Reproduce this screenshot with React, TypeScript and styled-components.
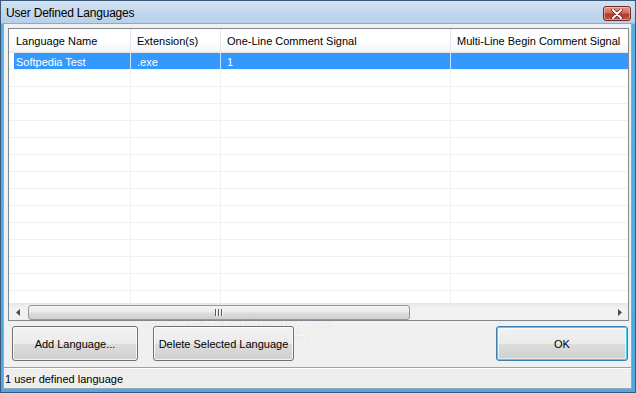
import React from "react";
import styled, { createGlobalStyle } from "styled-components";

const Global = createGlobalStyle`
  html, body { margin: 0; padding: 0; background: #fff; }
  body { font-family: "Liberation Sans", Arial, sans-serif; font-size: 11px; }
  * { box-sizing: border-box; }
`;

const Window = styled.div`
  width: 636px;
  height: 393px;
  display: flex;
  flex-direction: column;
  border: 1px solid #3b5978;
  background: linear-gradient(to bottom, #d3e2f3 0px, #bfd4ec 22px, #56aee4 23px, #4fa9e0 100%);
  overflow: hidden;
  position: relative;
`;

const TitleBar = styled.div`
  height: 22px;
  flex: none;
  display: flex;
  align-items: center;
  justify-content: space-between;
  padding: 0 4px 0 5px;
  background: linear-gradient(to bottom, #d3e2f3 0%, #c4d8ee 50%, #b6cfea 100%);
`;

const Title = styled.span`
  font-size: 12px;
  color: #000;
  letter-spacing: -0.2px;
  margin-top: 1px;
`;

const CloseButton = styled.div`
  width: 28px;
  height: 15px;
  margin-top: 3px;
  border: 1px solid #6b2b2b;
  border-radius: 3px;
  background: linear-gradient(to bottom, #e49a8c 0%, #d36b5a 45%, #b53a26 55%, #c8553f 100%);
  display: flex;
  align-items: center;
  justify-content: center;
  box-shadow: inset 0 0 0 1px rgba(255, 220, 210, 0.5);
`;

const Client = styled.div`
  flex: 1;
  margin: 0 3px 3px 2px;
  background: #f0f0f0;
  border: 1px solid #8fa8c4;
  display: flex;
  flex-direction: column;
  position: relative;
`;

const ListView = styled.div`
  margin: 4px 2px 0 4px;
  height: 293px;
  border: 1px solid #828790;
  background: #fff;
  display: flex;
  flex-direction: column;
  overflow: hidden;
`;

const Viewport = styled.div`
  flex: 1;
  overflow: hidden;
`;

const gridCols = "122px 90px 230px 200px";

const HeaderRow = styled.div`
  display: grid;
  grid-template-columns: ${gridCols};
  height: 24px;
  background: linear-gradient(to bottom, #ffffff 0%, #ffffff 50%, #f3f4f6 100%);
  border-bottom: 1px solid #e5e5e5;
`;

const HeaderCell = styled.div<{ $first?: boolean }>`
  display: flex;
  align-items: center;
  padding-left: ${(p) => (p.$first ? 7 : 6)}px;
  border-right: 1px solid #e3e6ea;
  color: #000;
  white-space: nowrap;
  overflow: hidden;
`;

const Row = styled.div`
  display: grid;
  grid-template-columns: ${gridCols};
  height: 17px;
`;

const Cell = styled.div<{ $first?: boolean; $selected?: boolean }>`
  display: flex;
  align-items: center;
  padding-left: ${(p) => (p.$first ? 7 : 6)}px;
  border-right: 1px solid ${(p) => (p.$selected ? "#cfe5ff" : "#f0f0f0")};
  border-bottom: 1px solid #f0f0f0;
  color: ${(p) => (p.$selected ? "#fff" : "#000")};
  background: ${(p) =>
    p.$selected
      ? p.$first
        ? "linear-gradient(to right, #fff 5px, #3399ff 5px)"
        : "#3399ff"
      : "transparent"};
  white-space: nowrap;
  overflow: hidden;
  padding-top: 1px;
`;

const HScroll = styled.div`
  height: 17px;
  flex: none;
  display: flex;
  align-items: center;
  background: linear-gradient(to bottom, #e9e9e9 0%, #f2f2f2 30%, #f0f0f0 100%);
  border-top: 1px solid #e6e6e6;
`;

const Arrow = styled.div`
  width: 17px;
  height: 16px;
  display: flex;
  align-items: center;
  justify-content: center;
  flex: none;
`;

const Track = styled.div`
  flex: 1;
  height: 16px;
  display: flex;
  align-items: center;
`;

const Thumb = styled.div`
  width: 382px;
  height: 15px;
  margin-left: 2px;
  border: 1px solid #979797;
  border-radius: 3px;
  background: linear-gradient(to bottom, #f4f4f4 0%, #ececec 45%, #dbdbdb 55%, #d0d0d0 100%);
  display: flex;
  align-items: center;
  justify-content: center;
`;

const Grip = styled.div`
  display: flex;
  gap: 1px;
  & > span {
    width: 1px;
    height: 7px;
    background: #5a5a5a;
    box-shadow: 1px 0 0 #fafafa;
    margin-right: 1px;
  }
`;

const ButtonRow = styled.div`
  display: flex;
  align-items: center;
  margin: 5px 3px 0 8px;
  height: 35px;
  position: relative;
  z-index: 1;
`;

const Button = styled.button<{ $w: number; $default?: boolean }>`
  width: ${(p) => p.$w}px;
  height: 35px;
  font-family: "Liberation Sans", Arial, sans-serif;
  font-size: 11px;
  color: #000;
  padding: 0;
  border-radius: 3px;
  border: 1px solid ${(p) => (p.$default ? "#3c7fb1" : "#707070")};
  background: linear-gradient(to bottom, #f2f2f2 0%, #ebebeb 50%, #dddddd 51%, #cfcfcf 100%);
  box-shadow: ${(p) =>
    p.$default
      ? "inset 0 0 0 1px #48d0f8, inset 0 0 0 2px rgba(255,255,255,0.5)"
      : "inset 0 0 0 1px rgba(255,255,255,0.8)"};
`;

const Spacer = styled.div<{ $w?: number }>`
  ${(p) => (p.$w ? `width: ${p.$w}px;` : "flex: 1;")}
`;

const StatusBar = styled.div`
  margin-top: 6px;
  flex: 1;
  border-top: 1px solid #a0a0a0;
  background: #f0eeec;
  display: flex;
  align-items: center;
  padding: 1px 0 0 1px;
  color: #000;
  box-shadow: inset 0 1px 0 #ffffff;
`;

const Watermark = styled.div`
  position: absolute;
  left: 140px;
  top: 294px;
  pointer-events: none;
  display: flex;
  flex-direction: column;
  align-items: center;
  font-family: "DejaVu Sans", sans-serif;
  z-index: 0;
`;

const WmBig = styled.span`
  font-size: 28px;
  letter-spacing: 1px;
  line-height: 30px;
  color: #f4f4f4;
  text-shadow: 0 0 1px rgba(160, 160, 160, 0.35);
`;

const WmSmall = styled.span`
  font-size: 9px;
  margin-top: 4px;
  color: #f4f4f4;
  text-shadow: 0 0 1px rgba(160, 160, 160, 0.35);
`;

const headers = [
  "Language Name",
  "Extension(s)",
  "One-Line Comment Signal",
  "Multi-Line Begin Comment Signal",
];

export default function App() {
  const emptyRows = Array.from({ length: 14 });
  return (
    <>
      <Global />
      <Window>
        <TitleBar>
          <Title>User Defined Languages</Title>
          <CloseButton>
            <svg width="12" height="10" viewBox="0 0 12 10">
              <path
                d="M2 1 L10 9 M10 1 L2 9"
                stroke="#5a2020"
                strokeWidth="3.4"
                strokeLinecap="round"
                fill="none"
              />
              <path
                d="M2 1 L10 9 M10 1 L2 9"
                stroke="#ffffff"
                strokeWidth="2"
                strokeLinecap="round"
                fill="none"
              />
            </svg>
          </CloseButton>
        </TitleBar>
        <Client>
          <Watermark>
            <WmBig>SOFTPEDIA™</WmBig>
            <WmSmall>www.softpedia.com</WmSmall>
          </Watermark>
          <ListView>
            <HeaderRow>
              {headers.map((h, i) => (
                <HeaderCell key={h} $first={i === 0}>
                  {h}
                </HeaderCell>
              ))}
            </HeaderRow>
            <Viewport>
              <Row>
                <Cell $first $selected>Softpedia Test</Cell>
                <Cell $selected>.exe</Cell>
                <Cell $selected>1</Cell>
                <Cell $selected></Cell>
              </Row>
              {emptyRows.map((_, r) => (
                <Row key={r}>
                  <Cell $first />
                  <Cell />
                  <Cell />
                  <Cell />
                </Row>
              ))}
            </Viewport>
            <HScroll>
              <Arrow>
                <svg width="4" height="7" viewBox="0 0 4 7">
                  <path d="M4 0 L0 3.5 L4 7 Z" fill="#4d4d4d" />
                </svg>
              </Arrow>
              <Track>
                <Thumb>
                  <Grip>
                    <span />
                    <span />
                    <span />
                  </Grip>
                </Thumb>
              </Track>
              <Arrow>
                <svg width="4" height="7" viewBox="0 0 4 7">
                  <path d="M0 0 L4 3.5 L0 7 Z" fill="#4d4d4d" />
                </svg>
              </Arrow>
            </HScroll>
          </ListView>
          <ButtonRow>
            <Button $w={126}>Add Language...</Button>
            <Spacer $w={15} />
            <Button $w={141}>Delete Selected Language</Button>
            <Spacer />
            <Button $w={132} $default>
              OK
            </Button>
          </ButtonRow>
          <StatusBar>1 user defined language</StatusBar>
        </Client>
      </Window>
    </>
  );
}
